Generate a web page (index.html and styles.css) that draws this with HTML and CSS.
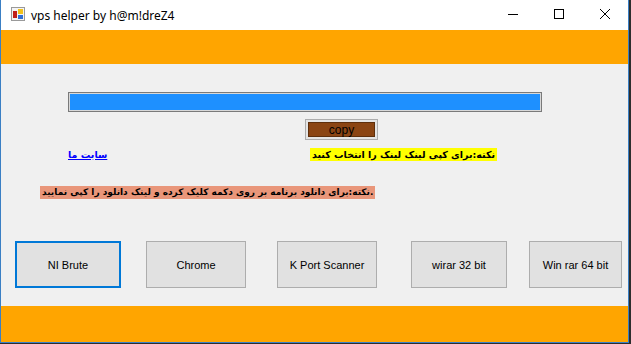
FILE: index.html
```html
<!DOCTYPE html>
<html lang="fa">
  <head>
    <meta charset="UTF-8" />
    <title>vps helper by h@m!dreZ4</title>
    <link rel="stylesheet" href="styles.css">
  </head>
  <body>
    <div class="window">
      <div class="titlebar">
        <svg class="app-icon" width="14" height="14" viewBox="0 0 14 14">
          <rect x="0.5" y="0.5" width="13" height="13" fill="#f4f4f4" stroke="#9a9a9a" />
          <rect x="2" y="4" width="4" height="7" fill="#c0201a" />
          <rect x="7" y="2" width="5" height="5" fill="#f2c21b" />
          <rect x="7" y="8" width="5" height="4" fill="#2f6fd6" />
        </svg>
        <span class="title">vps helper by h@m!dreZ4</span>
        <div class="controls">
          <div class="ctl">
            <svg width="10" height="10" viewBox="0 0 10 10"><path d="M0 5.5H10" stroke="#000" /></svg>
          </div>
          <div class="ctl">
            <svg width="10" height="10" viewBox="0 0 10 10"><rect x="0.5" y="0.5" width="9" height="9" fill="none" stroke="#000" /></svg>
          </div>
          <div class="ctl">
            <svg width="10" height="10" viewBox="0 0 10 10"><path d="M0 0L10 10M10 0L0 10" stroke="#000" /></svg>
          </div>
        </div>
      </div>

      <div class="band"></div>

      <div class="content">
        <div class="link-box"></div>

        <div class="copy-row">
          <button class="copy-btn"><span>copy</span></button>
        </div>

        <div class="note-row">
          <a class="site-link" href="#">سایت ما</a>
          <span class="note note-yellow">نکته:برای کپی لینک لینک را انتخاب کنید</span>
        </div>

        <div class="note-row2">
          <span class="note note-salmon">نکته:برای دانلود برنامه بر روی دکمه کلیک کرده و لینک دانلود را کپی نمایید.</span>
        </div>

        <div class="buttons">
          <button class="button focused">NI Brute</button>
          <button class="button chrome">Chrome</button>
          <button class="button kport">K Port Scanner</button>
          <button class="button wirar">wirar 32 bit</button>
          <button class="button winrar">Win rar 64 bit</button>
        </div>
      </div>

      <div class="band band-bottom"></div>
    </div>
  </body>
</html>
```

FILE: styles.css
```css
/* --------------------
vps helper window
-------------------- */
body {
  margin: 0;
  background-color: #2d2d2d;
  font-family: "Liberation Sans", Arial, sans-serif;
}
.window {
  width: 627px;
  height: 342px;
  background-color: #ffffff;
  border-left: 1px solid #3a7fc4;
  border-right: 1px solid #3a7fc4;
  border-bottom: 1px solid #3a7fc4;
}
.titlebar {
  display: flex;
  align-items: center;
  height: 30px;
  background-color: #ffffff;
}
.app-icon {
  margin-left: 10px;
  margin-top: -2px;
}
.title {
  margin-left: 6px;
  font-family: "Noto Sans", sans-serif;
  font-size: 12px;
  color: #000;
}
.controls {
  display: flex;
  margin-left: auto;
  height: 30px;
}
.ctl {
  display: flex;
  align-items: center;
  justify-content: center;
  width: 46px;
  height: 28px;
}
.band {
  height: 34px;
  background-color: #ffa500;
}
.band-bottom {
  height: 36px;
}
.content {
  height: 242px;
  background-color: #f0f0f0;
  padding-top: 28px;
  box-sizing: border-box;
}
.link-box {
  margin-left: 67px;
  width: 474px;
  height: 20px;
  box-sizing: border-box;
  border: 1px solid #7a7a7a;
  box-shadow: inset 0 0 0 1px #d8d8d8;
  background-color: #1e90ff;
}
.copy-row {
  margin-top: 7px;
  padding-left: 304px;
  height: 21px;
}
.copy-btn {
  display: block;
  width: 73px;
  height: 21px;
  padding: 2px;
  margin: 0;
  border: 1px solid #adadad;
  background-color: #e5e5e5;
  box-sizing: border-box;
}
.copy-btn span {
  display: block;
  height: 15px;
  line-height: 14px;
  border: 1px solid #5e2f0c;
  box-sizing: border-box;
  background-color: #8b4513;
  font-family: "Liberation Sans", Arial, sans-serif;
  font-size: 12px;
  color: #000;
  text-align: center;
}
.note-row {
  display: flex;
  align-items: center;
  margin-top: 8px;
  height: 13px;
}
.site-link {
  margin-left: 67px;
  width: 38px;
  font-family: "DejaVu Sans", sans-serif;
  font-size: 9.5px;
  font-weight: bold;
  line-height: 13px;
  color: #0000ff;
  white-space: nowrap;
}
.note {
  display: inline-block;
  height: 13px;
  line-height: 13px;
  padding: 0 2px;
  font-family: "DejaVu Sans", sans-serif;
  font-size: 9.5px;
  font-weight: bold;
  color: #000;
  white-space: nowrap;
}
.note-yellow {
  margin-left: 204px;
  background-color: #ffff00;
}
.note-row2 {
  margin-top: 20px;
  padding-left: 39px;
  height: 13px;
}
.note-salmon {
  font-size: 9px;
  background-color: #e9967a;
  direction: ltr;
}
.buttons {
  display: flex;
  margin-top: 47px;
  height: 47px;
}
.button {
  height: 47px;
  margin: 0;
  padding: 0;
  background-color: #e1e1e1;
  border: 1px solid #adadad;
  font-family: "Liberation Sans", Arial, sans-serif;
  font-size: 11px;
  color: #000;
}
.focused {
  margin-left: 14px;
  width: 106px;
  border: 2px solid #0078d7;
}
.chrome {
  margin-left: 25px;
  width: 100px;
}
.kport {
  margin-left: 31px;
  width: 100px;
}
.wirar {
  margin-left: 34px;
  width: 96px;
}
.winrar {
  margin-left: 22px;
  width: 93px;
}
```
